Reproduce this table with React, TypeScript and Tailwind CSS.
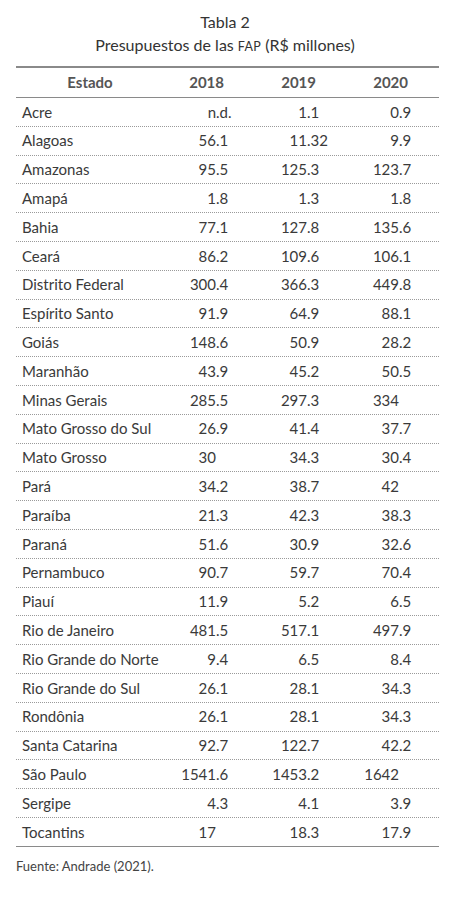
const rows: [string, string, string, string][] = [
  ["Acre", "n.d.", "1.1", "0.9"],
  ["Alagoas", "56.1", "11.32", "9.9"],
  ["Amazonas", "95.5", "125.3", "123.7"],
  ["Amapá", "1.8", "1.3", "1.8"],
  ["Bahia", "77.1", "127.8", "135.6"],
  ["Ceará", "86.2", "109.6", "106.1"],
  ["Distrito Federal", "300.4", "366.3", "449.8"],
  ["Espírito Santo", "91.9", "64.9", "88.1"],
  ["Goiás", "148.6", "50.9", "28.2"],
  ["Maranhão", "43.9", "45.2", "50.5"],
  ["Minas Gerais", "285.5", "297.3", "334"],
  ["Mato Grosso do Sul", "26.9", "41.4", "37.7"],
  ["Mato Grosso", "30", "34.3", "30.4"],
  ["Pará", "34.2", "38.7", "42"],
  ["Paraíba", "21.3", "42.3", "38.3"],
  ["Paraná", "51.6", "30.9", "32.6"],
  ["Pernambuco", "90.7", "59.7", "70.4"],
  ["Piauí", "11.9", "5.2", "6.5"],
  ["Rio de Janeiro", "481.5", "517.1", "497.9"],
  ["Rio Grande do Norte", "9.4", "6.5", "8.4"],
  ["Rio Grande do Sul", "26.1", "28.1", "34.3"],
  ["Rondônia", "26.1", "28.1", "34.3"],
  ["Santa Catarina", "92.7", "122.7", "42.2"],
  ["São Paulo", "1541.6", "1453.2", "1642"],
  ["Sergipe", "4.3", "4.1", "3.9"],
  ["Tocantins", "17", "18.3", "17.9"],
]

// splits a number at the decimal point so columns line up on it
function Num({ value, intW, fracW }: { value: string; intW: string; fracW: string }) {
  const i = value.indexOf(".")
  const whole = i < 0 ? value : value.slice(0, i)
  const frac = i < 0 ? "" : value.slice(i)
  return (
    <div className="flex">
      <span className={`${intW} text-right`}>{whole}</span>
      <span className={`${fracW} whitespace-nowrap text-left`}>{frac}</span>
    </div>
  )
}

export default function App() {
  return (
    <div className="min-h-[902px] w-[450px] bg-white font-['Lato',sans-serif] text-[#3a3a3a]">
      <div className="pt-[10px] text-center text-[16px] leading-[23px] text-[#333]">
        <div>Tabla 2</div>
        <div>
          Presupuestos de las <span className="text-[12.5px] tracking-[0.3px]">FAP</span> (R$ millones)
        </div>
      </div>

      <div className="ml-4 mt-[8px] w-[423px] border-t-2 border-[#8a8a8a]">
        <div className="flex h-[30px] items-center border-b-[1.5px] border-[#8a8a8a] text-[15px] font-bold text-[#555]">
          <div className="w-[148px] text-center">Estado</div>
          <div className="w-[68px] pr-2 text-right">2018</div>
          <div className="w-[92px] pr-2 text-right">2019</div>
          <div className="w-[93px] pr-[9px] text-right">2020</div>
        </div>

        {rows.map(([name, a, b, c], idx) => (
          <div
            key={name}
            className={`flex h-[28.8px] items-center text-[15px] ${
              idx === rows.length - 1 ? "border-b-[1.5px] border-solid border-[#8a8a8a]" : "border-b border-dotted border-[#9a9a9a]"
            }`}
          >
            <div className="w-[148px] pl-[6px] whitespace-nowrap">{name}</div>
            <div className="w-[68px]">
              <Num value={a} intW="w-[52px]" fracW="w-[16px]" />
            </div>
            <div className="w-[92px]">
              <Num value={b} intW="w-[75px]" fracW="w-[17px]" />
            </div>
            <div className="w-[93px]">
              <Num value={c} intW="w-[75px]" fracW="w-[18px]" />
            </div>
          </div>
        ))}
      </div>

      <div className="ml-4 mt-[10px] text-[13px] text-[#444]">Fuente: Andrade (2021).</div>
    </div>
  )
}
